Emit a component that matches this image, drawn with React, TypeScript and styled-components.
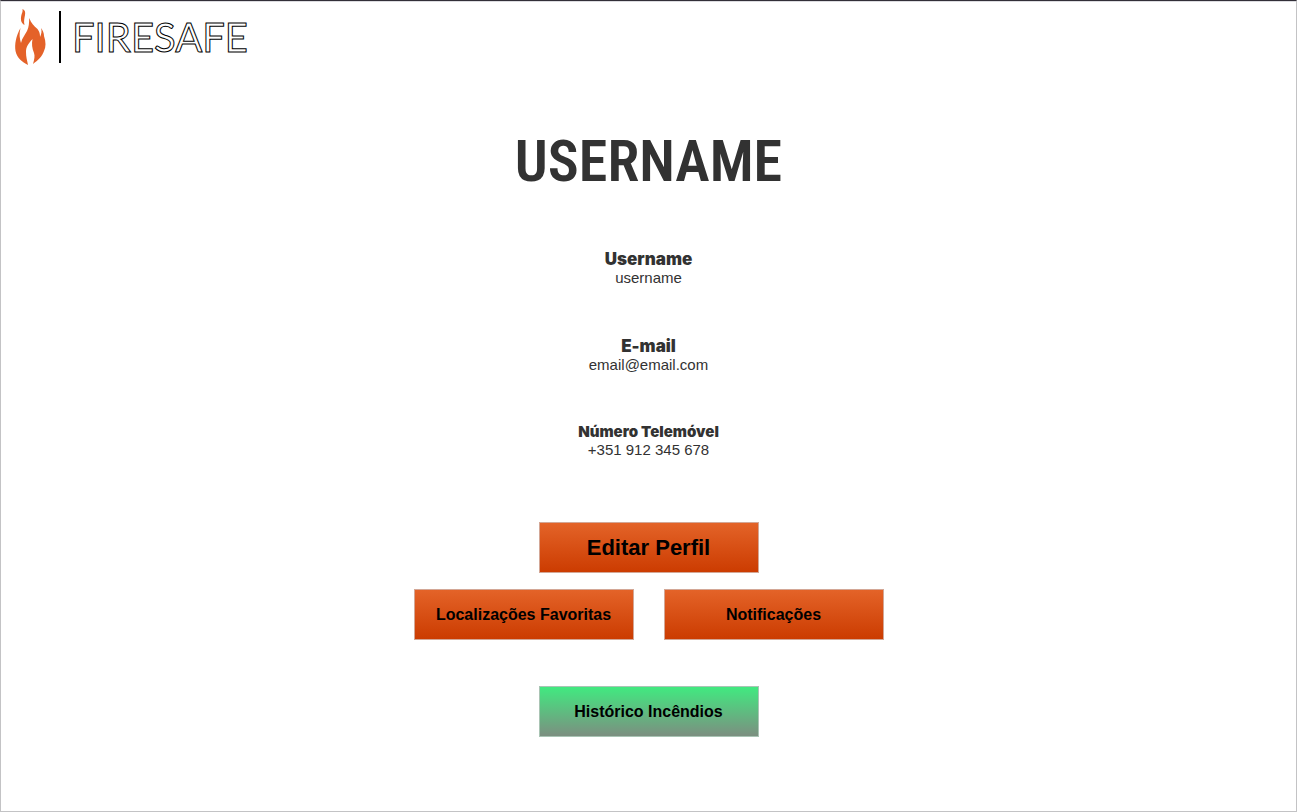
import React from "react";
import styled, { createGlobalStyle } from "styled-components";

const GlobalStyle = createGlobalStyle`
  * { box-sizing: border-box; }
  body {
    margin: 0;
    background: #fff;
    color: #323232;
    font-family: "Liberation Sans", Arial, sans-serif;
  }
`;

const Page = styled.div`
  min-height: 100vh;
  border: 1px solid #c3c3c5;
  border-top: 1px solid #322f38;
  box-shadow: inset 0 1px 0 #dcdce0;
`;

const Header = styled.header`
  display: flex;
  padding: 8px 13px;
`;

const Brand = styled.a`
  display: flex;
  align-items: center;
  height: 56px;
  color: #000;
  text-decoration: none;
`;

const Flame = styled.svg`
  width: 32px;
  height: 56px;
`;

const Divider = styled.span`
  width: 2px;
  height: 52px;
  margin: 0 11px 0 13px;
  background: #000;
`;

const Wordmark = styled.span`
  font: 400 40px/54px Lato, sans-serif;
  color: #fff;
  -webkit-text-stroke: 1px #000;
`;

const Main = styled.main`
  display: flex;
  flex-direction: column;
  align-items: center;
  padding: 56px 16px 72px;
`;

const Title = styled.h1`
  margin: 0 0 56px;
  font: 600 58px/64px "Liberation Sans Narrow", "Roboto Condensed", Roboto, sans-serif;
`;

const Details = styled.dl`
  display: grid;
  gap: 49px;
  margin: 0 0 63px;
  text-align: center;
`;

const Label = styled.dt<{ $small?: boolean }>`
  font: 900 ${(p) => (p.$small ? "15px/18px" : "17px/20px")} Inter, sans-serif;
`;

const Value = styled.dd`
  margin: 0;
  font-size: 15px;
  line-height: 18px;
`;

const Actions = styled.div`
  display: grid;
  justify-items: center;
  gap: 16px;
  margin-bottom: 46px;
`;

const ActionRow = styled.div`
  display: flex;
  flex-wrap: wrap;
  justify-content: center;
  gap: 30px;
`;

const Button = styled.button<{ $large?: boolean; $tone?: "green" }>`
  width: 220px;
  height: 51px;
  padding: 0;
  border: 1px solid ${(p) => (p.$tone ? "#a9c4b4" : "#d3a796")};
  background: ${(p) =>
    p.$tone
      ? "linear-gradient(#40eb80, #7d8d80)"
      : "linear-gradient(#e46429, #cb3b00)"};
  background-origin: border-box;
  color: #000;
  font: 700 ${(p) => (p.$large ? 22 : 16)}px/24px "Liberation Sans", Arial, sans-serif;
  cursor: pointer;
`;

const details = [
  { label: "Username", value: "username" },
  { label: "E-mail", value: "email@email.com" },
  { label: "Número Telemóvel", value: "+351 912 345 678", small: true },
];

export default function App() {
  return (
    <Page>
      <GlobalStyle />
      <Header>
        <Brand href="#">
          <Flame viewBox="0 0 32 56" aria-hidden="true">
            <path
              fill="#e46229"
              d="M8.500 0C11 1 11.500 3 11 6C10.500 9 9.500 12 10.500 16C7 14 6.500 11 7.200 7C7.800 4 9 3 8.500 0ZM15.300 9C17 14 20 17 23.500 20C25.500 22.500 26 25 26 28C27.500 25 28 22 27 19C29 22 30 24 30 27C32 33 32 38 30 42C28 48 24 51 19 55C20.500 50 21 47 20 44C18 39 17.500 35 18.500 30C14 35 12 38 12 43C12 48 13 51 14 56C8 53 3 49 1.500 42C0.500 35 2 27 6.500 19C5 25 5.500 29 7 34C8 29 11 26 13 22C15 18 15 14 15.300 9Z"
            />
          </Flame>
          <Divider />
          <Wordmark>FIRESAFE</Wordmark>
        </Brand>
      </Header>
      <Main>
        <Title>USERNAME</Title>
        <Details>
          {details.map((d) => (
            <div key={d.label}>
              <Label $small={d.small}>{d.label}</Label>
              <Value>{d.value}</Value>
            </div>
          ))}
        </Details>
        <Actions>
          <Button $large>Editar Perfil</Button>
          <ActionRow>
            <Button>Localizações Favoritas</Button>
            <Button>Notificações</Button>
          </ActionRow>
        </Actions>
        <Button $tone="green">Histórico Incêndios</Button>
      </Main>
    </Page>
  );
}
